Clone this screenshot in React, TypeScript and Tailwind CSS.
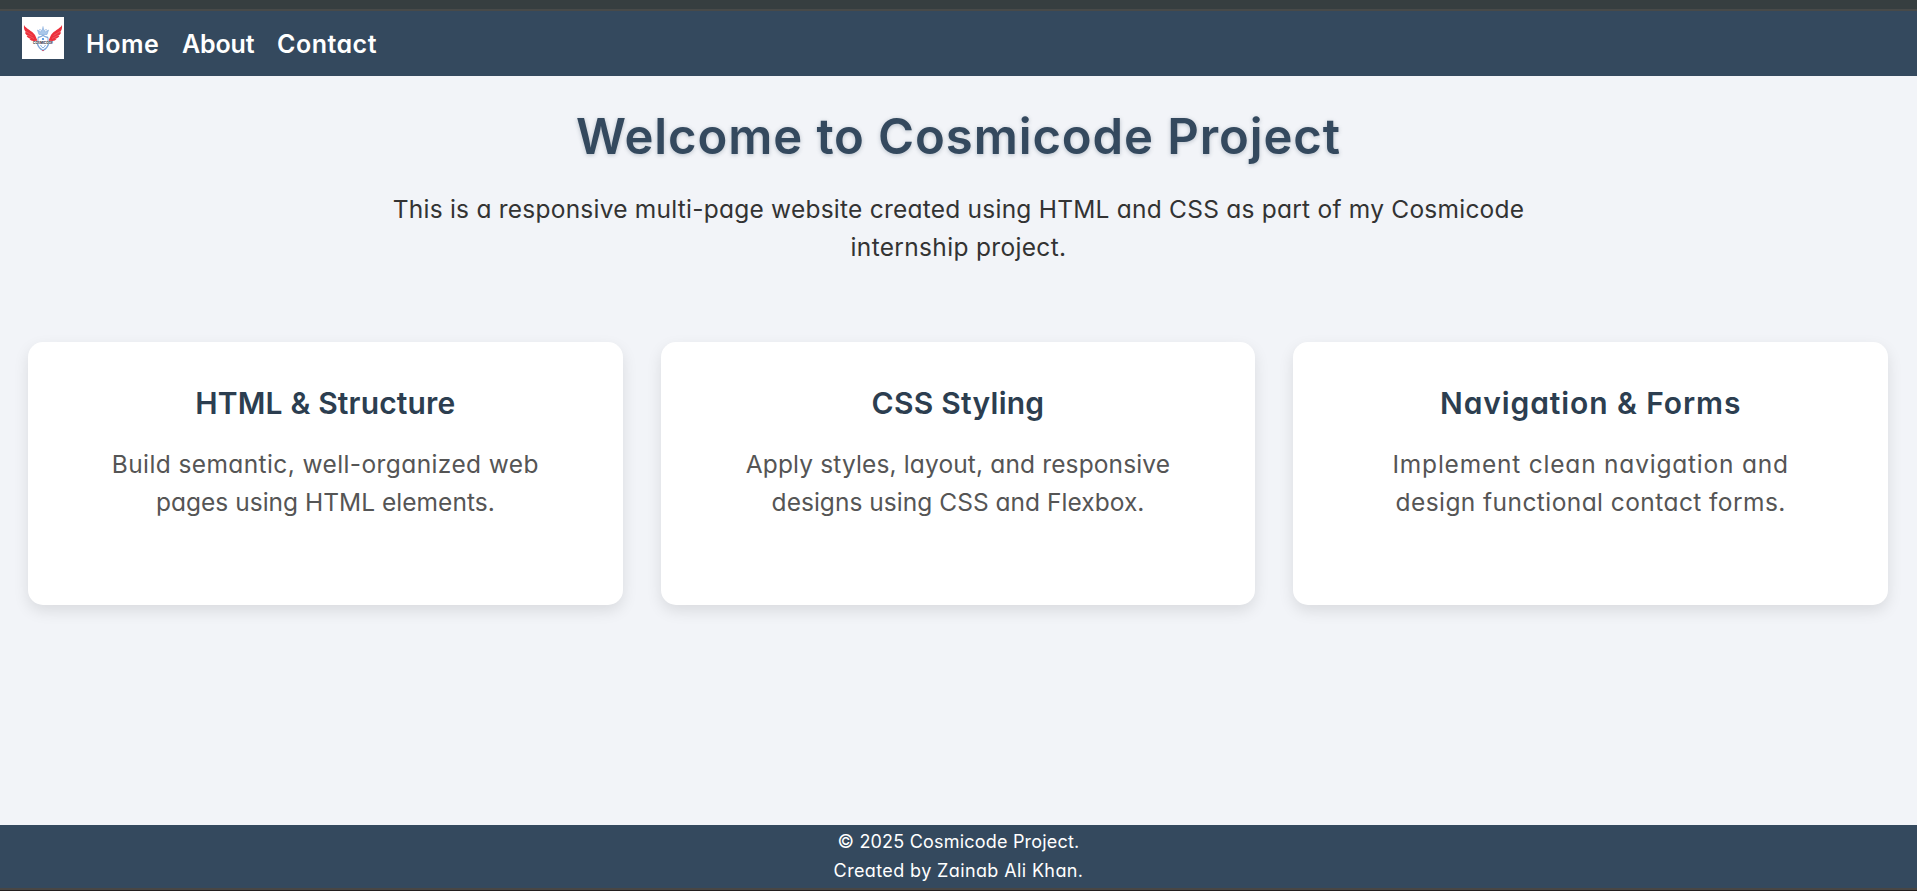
type Line = { text: string; spacing: string };

const cards: { title: Line; lines: Line[] }[] = [
  {
    title: { text: "HTML & Structure", spacing: "tracking-[0.15px]" },
    lines: [
      { text: "Build semantic, well-organized web", spacing: "tracking-[0.4px]" },
      { text: "pages using HTML elements.", spacing: "tracking-[0.02px]" },
    ],
  },
  {
    title: { text: "CSS Styling", spacing: "tracking-[0.25px]" },
    lines: [
      { text: "Apply styles, layout, and responsive", spacing: "tracking-[0.14px]" },
      { text: "designs using CSS and Flexbox.", spacing: "tracking-[0.03px]" },
    ],
  },
  {
    title: { text: "Navigation & Forms", spacing: "tracking-[0.9px]" },
    lines: [
      { text: "Implement clean navigation and", spacing: "tracking-[0.79px]" },
      { text: "design functional contact forms.", spacing: "tracking-[0.43px]" },
    ],
  },
];

function Wing() {
  return (
    <>
      <path
        d="M2 8C4 12 10 13.500 13 18L15.500 23.800L11.500 24C9.800 23.900 8.300 23.200 7.500 22L9 21.900C7 21.500 5.300 20.500 4.600 19L6.300 19.100C4.500 18.200 3.300 16.900 2.900 15.200L4.300 15.500C2.300 13.500 1.600 11 2 8Z"
        fill="#ec303b"
      />
      <path d="M4 14.500L10.500 18.500M6 18.500L12 21.500" stroke="#f58b91" strokeWidth="0.400" />
    </>
  );
}

function Logo() {
  return (
    <svg viewBox="0 0 42 42" className="size-[42px] shrink-0 bg-white" role="img">
      <Wing />
      <g transform="translate(42 0) scale(-1 1)">
        <Wing />
      </g>
      <g fill="none" stroke="#7aa5da">
        <path d="M15.500 13L17 17.500H25L26.500 13L23.500 15L21 11.500L18.500 15Z" fill="#a9c7ea" strokeWidth="0.600" />
        <path d="M21 9.500V12M18 12V13.500M24 12V13.500" strokeWidth="0.900" />
        <path d="M16 20.500Q18.500 20 21 18.500Q23.500 20 26 20.500M15.500 27Q16.500 31 21 33.500Q25.500 31 26.500 27" strokeWidth="1.300" />
        <path d="M16 20.500V24M26 20.500V24M18.500 28Q19.500 30 21 31Q22.500 30 23.500 28" strokeWidth="0.900" />
      </g>
      <circle cx="21" cy="22" r="1.100" fill="#3d86dc" />
      <path d="M20 33L21 34.300L22 33Z" fill="#ec303b" />
      <text
        x="21"
        y="27"
        textAnchor="middle"
        textLength="20"
        lengthAdjust="spacingAndGlyphs"
        className="fill-[#2b2f3c] font-['Inter',sans-serif] text-[3px] font-bold"
      >
        COSMICODE
      </text>
    </svg>
  );
}

export default function App() {
  return (
    <div className="flex h-[891px] flex-col overflow-hidden bg-[#f2f4f8] font-['Inter','Noto_Sans',sans-serif] text-[24.5px] leading-[38.4px] text-[#333] [font-feature-settings:'cv11']">
      <div className="h-[11px] shrink-0 border-b-2 border-[#484a49] bg-[#363e40]" />
      <header className="flex h-[65px] shrink-0 items-start bg-[#34495e] pt-1.5 pl-[22px]">
        <Logo />
        <nav className="mt-2 ml-[22px] flex text-[25px] font-semibold text-white">
          <a href="#" className="w-24 tracking-[0.57px]">Home</a>
          <a href="#" className="w-[95px] tracking-[-0.15px]">About</a>
          <a href="#" className="tracking-[0.5px]">Contact</a>
        </nav>
      </header>

      <main className="flex grow flex-col">
        <section className="pt-[22px] text-center">
          <h1 className="text-[49px] leading-[77px] font-semibold tracking-[0.9px] text-[#34495e] [text-shadow:0_1px_4px_rgba(52,73,94,0.3)]">
            Welcome to Cosmicode Project
          </h1>
          <p className="mt-[15px]">
            <span className="block tracking-[0.234px]">
              This is a responsive multi-page website created using HTML and CSS as part of my Cosmicode
            </span>
            <span className="block tracking-[0.33px]">internship project.</span>
          </p>
        </section>

        <section className="mt-[75px] grid grid-cols-3 gap-[38px] pr-[29px] pl-[28px]">
          {cards.map((card) => (
            <article
              key={card.title.text}
              className="h-[263px] rounded-[15px] bg-white pt-9 text-center shadow-[0_6px_15px_rgba(0,0,0,0.1)]"
            >
              <h2 className={`text-[30px] leading-[50px] font-semibold text-[#2c3e50] ${card.title.spacing}`}>
                {card.title.text}
              </h2>
              <p className="mt-[17px] text-[#555]">
                {card.lines.map((line) => (
                  <span key={line.text} className={`block ${line.spacing}`}>
                    {line.text}
                  </span>
                ))}
              </p>
            </article>
          ))}
        </section>
      </main>

      <footer className="h-[63px] shrink-0 bg-[#34495e] pt-[3px] text-center text-[18px] leading-[28.8px] text-white">
        <p className="tracking-[0.2px]">© 2025 Cosmicode Project.</p>
        <p className="tracking-[0.38px]">Created by Zainab Ali Khan.</p>
      </footer>
      <div className="h-[3px] shrink-0 border-t-2 border-[#484644] bg-[#231f1f]" />
    </div>
  );
}
